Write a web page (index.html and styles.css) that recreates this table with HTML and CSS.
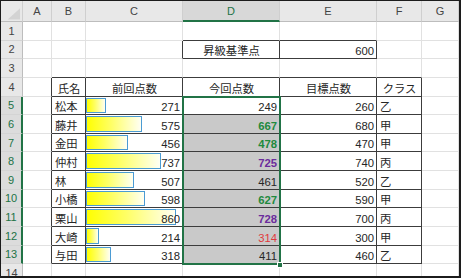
FILE: index.html
```html
<!DOCTYPE html>
<html lang="ja">
<head>
<meta charset="utf-8">
<title>昇級基準点</title>
<link rel="stylesheet" href="styles.css">
</head>
<body>
<div class="frame">
  <div class="sheet">
    <!-- header row -->
    <div class="c h corner"><svg width="22" height="21" viewBox="0 0 22 21"><polygon points="7,19 20,19 20,7" fill="#d3d3d3"/></svg></div>
    <div class="c h">A</div>
    <div class="c h">B</div>
    <div class="c h">C</div>
    <div class="c h hsel">D</div>
    <div class="c h">E</div>
    <div class="c h">F</div>
    <div class="c h">G</div>

    <!-- row 1 -->
    <div class="c rh">1</div>
    <div class="c"></div><div class="c"></div><div class="c"></div>
    <div class="c tb"></div><div class="c tb"></div>
    <div class="c"></div><div class="c"></div>

    <!-- row 2 -->
    <div class="c rh">2</div>
    <div class="c"></div><div class="c"></div><div class="c tr"></div>
    <div class="c t m">昇級基準点</div>
    <div class="c t r">600</div>
    <div class="c"></div><div class="c"></div>

    <!-- row 3 -->
    <div class="c rh">3</div>
    <div class="c"></div>
    <div class="c tb"></div><div class="c tb"></div><div class="c tb"></div><div class="c tb"></div><div class="c tb"></div>
    <div class="c"></div>

    <!-- row 4 -->
    <div class="c rh">4</div>
    <div class="c tr"></div>
    <div class="c t m">氏名</div>
    <div class="c t m">前回点数</div>
    <div class="c t m">今回点数</div>
    <div class="c t m">目標点数</div>
    <div class="c t m">クラス</div>
    <div class="c"></div>

    <!-- row 5 -->
    <div class="c rh on">5</div>
    <div class="c tr"></div>
    <div class="c t">松本</div>
    <div class="c t bc"><span class="bar" style="width:20px"></span><span class="v">271</span></div>
    <div class="c t r">249</div>
    <div class="c t r">260</div>
    <div class="c t">乙</div>
    <div class="c"></div>

    <!-- row 6 -->
    <div class="c rh on">6</div>
    <div class="c tr"></div>
    <div class="c t">藤井</div>
    <div class="c t bc"><span class="bar" style="width:56px"></span><span class="v">575</span></div>
    <div class="c t r s green">667</div>
    <div class="c t r">680</div>
    <div class="c t">甲</div>
    <div class="c"></div>

    <!-- row 7 -->
    <div class="c rh on">7</div>
    <div class="c tr"></div>
    <div class="c t">金田</div>
    <div class="c t bc"><span class="bar" style="width:42px"></span><span class="v">456</span></div>
    <div class="c t r s green">478</div>
    <div class="c t r">470</div>
    <div class="c t">甲</div>
    <div class="c"></div>

    <!-- row 8 -->
    <div class="c rh on">8</div>
    <div class="c tr"></div>
    <div class="c t">仲村</div>
    <div class="c t bc"><span class="bar" style="width:75px"></span><span class="v">737</span></div>
    <div class="c t r s purple">725</div>
    <div class="c t r">740</div>
    <div class="c t">丙</div>
    <div class="c"></div>

    <!-- row 9 -->
    <div class="c rh on">9</div>
    <div class="c tr"></div>
    <div class="c t">林</div>
    <div class="c t bc"><span class="bar" style="width:48px"></span><span class="v">507</span></div>
    <div class="c t r s">461</div>
    <div class="c t r">520</div>
    <div class="c t">乙</div>
    <div class="c"></div>

    <!-- row 10 -->
    <div class="c rh on">10</div>
    <div class="c tr"></div>
    <div class="c t">小橋</div>
    <div class="c t bc"><span class="bar" style="width:59px"></span><span class="v">598</span></div>
    <div class="c t r s green">627</div>
    <div class="c t r">590</div>
    <div class="c t">甲</div>
    <div class="c"></div>

    <!-- row 11 -->
    <div class="c rh on">11</div>
    <div class="c tr"></div>
    <div class="c t">栗山</div>
    <div class="c t bc"><span class="bar" style="width:90px"></span><span class="v">860</span></div>
    <div class="c t r s purple">728</div>
    <div class="c t r">700</div>
    <div class="c t">丙</div>
    <div class="c"></div>

    <!-- row 12 -->
    <div class="c rh on">12</div>
    <div class="c tr"></div>
    <div class="c t">大崎</div>
    <div class="c t bc"><span class="bar" style="width:13px"></span><span class="v">214</span></div>
    <div class="c t r s red">314</div>
    <div class="c t r">300</div>
    <div class="c t">甲</div>
    <div class="c"></div>

    <!-- row 13 -->
    <div class="c rh on">13</div>
    <div class="c tr"></div>
    <div class="c t">与田</div>
    <div class="c t bc"><span class="bar" style="width:25px"></span><span class="v">318</span></div>
    <div class="c t r s">411</div>
    <div class="c t r">460</div>
    <div class="c t">乙</div>
    <div class="c"></div>

    <!-- row 14 -->
    <div class="c rh">14</div>
    <div class="c"></div><div class="c"></div><div class="c"></div><div class="c"></div>
    <div class="c"></div><div class="c"></div><div class="c"></div>

    <!-- selection overlay -->
    <div class="sel"></div>
    <div class="handle"></div>
  </div>
</div>
</body>
</html>
```

FILE: styles.css
```css
* {
  box-sizing: border-box;
  margin: 0;
  padding: 0;
}

body {
  margin: 0;
  background: #ffffff;
}

.frame {
  width: 461px;
  height: 278px;
  border-style: solid;
  border-color: #1c1c1c;
  border-width: 1px 2px 2px 1px;
  overflow: hidden;
  font-family: "Liberation Sans", "Noto Sans CJK JP", sans-serif;
  font-size: 11.3px;
  color: #262626;
}

.sheet {
  position: relative;
  display: grid;
  grid-template-columns: 22px 29px 34px 97px 97px 97px 45px 37px;
  grid-template-rows: 21px repeat(14, 18.64px);
}

.c {
  display: flex;
  align-items: flex-end;
  padding: 0 2px 0 3px;
  line-height: 14px;
  white-space: nowrap;
  min-width: 0;
  background: #ffffff;
  border-right: 1px solid #e1e1e1;
  border-bottom: 1px solid #e1e1e1;
}

.r { justify-content: flex-end; }
.m { justify-content: center; }

.t { border-right-color: #3c3c3c; border-bottom-color: #3c3c3c; }
.tr { border-right-color: #3c3c3c; }
.tb { border-bottom-color: #3c3c3c; }

/* headers */
.h,
.rh {
  background: #e8e8e8;
  color: #444444;
  justify-content: center;
  align-items: center;
  font-size: 11px;
  padding: 0;
}

.h {
  border-right-color: #cfcfcf;
  border-bottom-color: #bdbdbd;
}

.rh {
  border-right-color: #bdbdbd;
  border-bottom-color: #d4d4d4;
}

.corner {
  align-items: stretch;
  justify-content: stretch;
}

.corner svg { display: block; }

.hsel {
  background: #d8d8d8;
  color: #217346;
  border-bottom: 2px solid #217346;
}

.rh.on {
  background: #dcdcdc;
  color: #217346;
  border-right: 2px solid #217346;
}

/* selected range fill */
.s { background: #c9c9c9; }

.green { color: #1f8a3e; font-weight: bold; }
.purple { color: #6b2c9c; font-weight: bold; }
.red { color: #e0393c; }

/* data bar cells */
.bc {
  display: grid;
  grid-template: 1fr / 1fr;
  padding: 0;
}

.bar {
  grid-area: 1 / 1;
  justify-self: start;
  align-self: stretch;
  margin: 1px 0 1px 0;
  border: 1px solid #4b9bd3;
  background: linear-gradient(90deg, #ffff00 0%, #ffff66 45%, #fffff4 100%);
}

.v {
  grid-area: 1 / 1;
  justify-self: end;
  align-self: end;
  padding-right: 2px;
}

/* selection outline over D5:D13 */
.sel {
  position: absolute;
  grid-column: 5 / 6;
  grid-row: 6 / 15;
  top: -1px;
  left: -1px;
  right: -1px;
  bottom: -1px;
  border: 2px solid #217346;
  pointer-events: none;
}

.handle {
  position: absolute;
  grid-column: 5 / 6;
  grid-row: 14 / 15;
  right: -3px;
  bottom: -4px;
  width: 6px;
  height: 6px;
  background: #217346;
  border: 1px solid #ffffff;
}
```
